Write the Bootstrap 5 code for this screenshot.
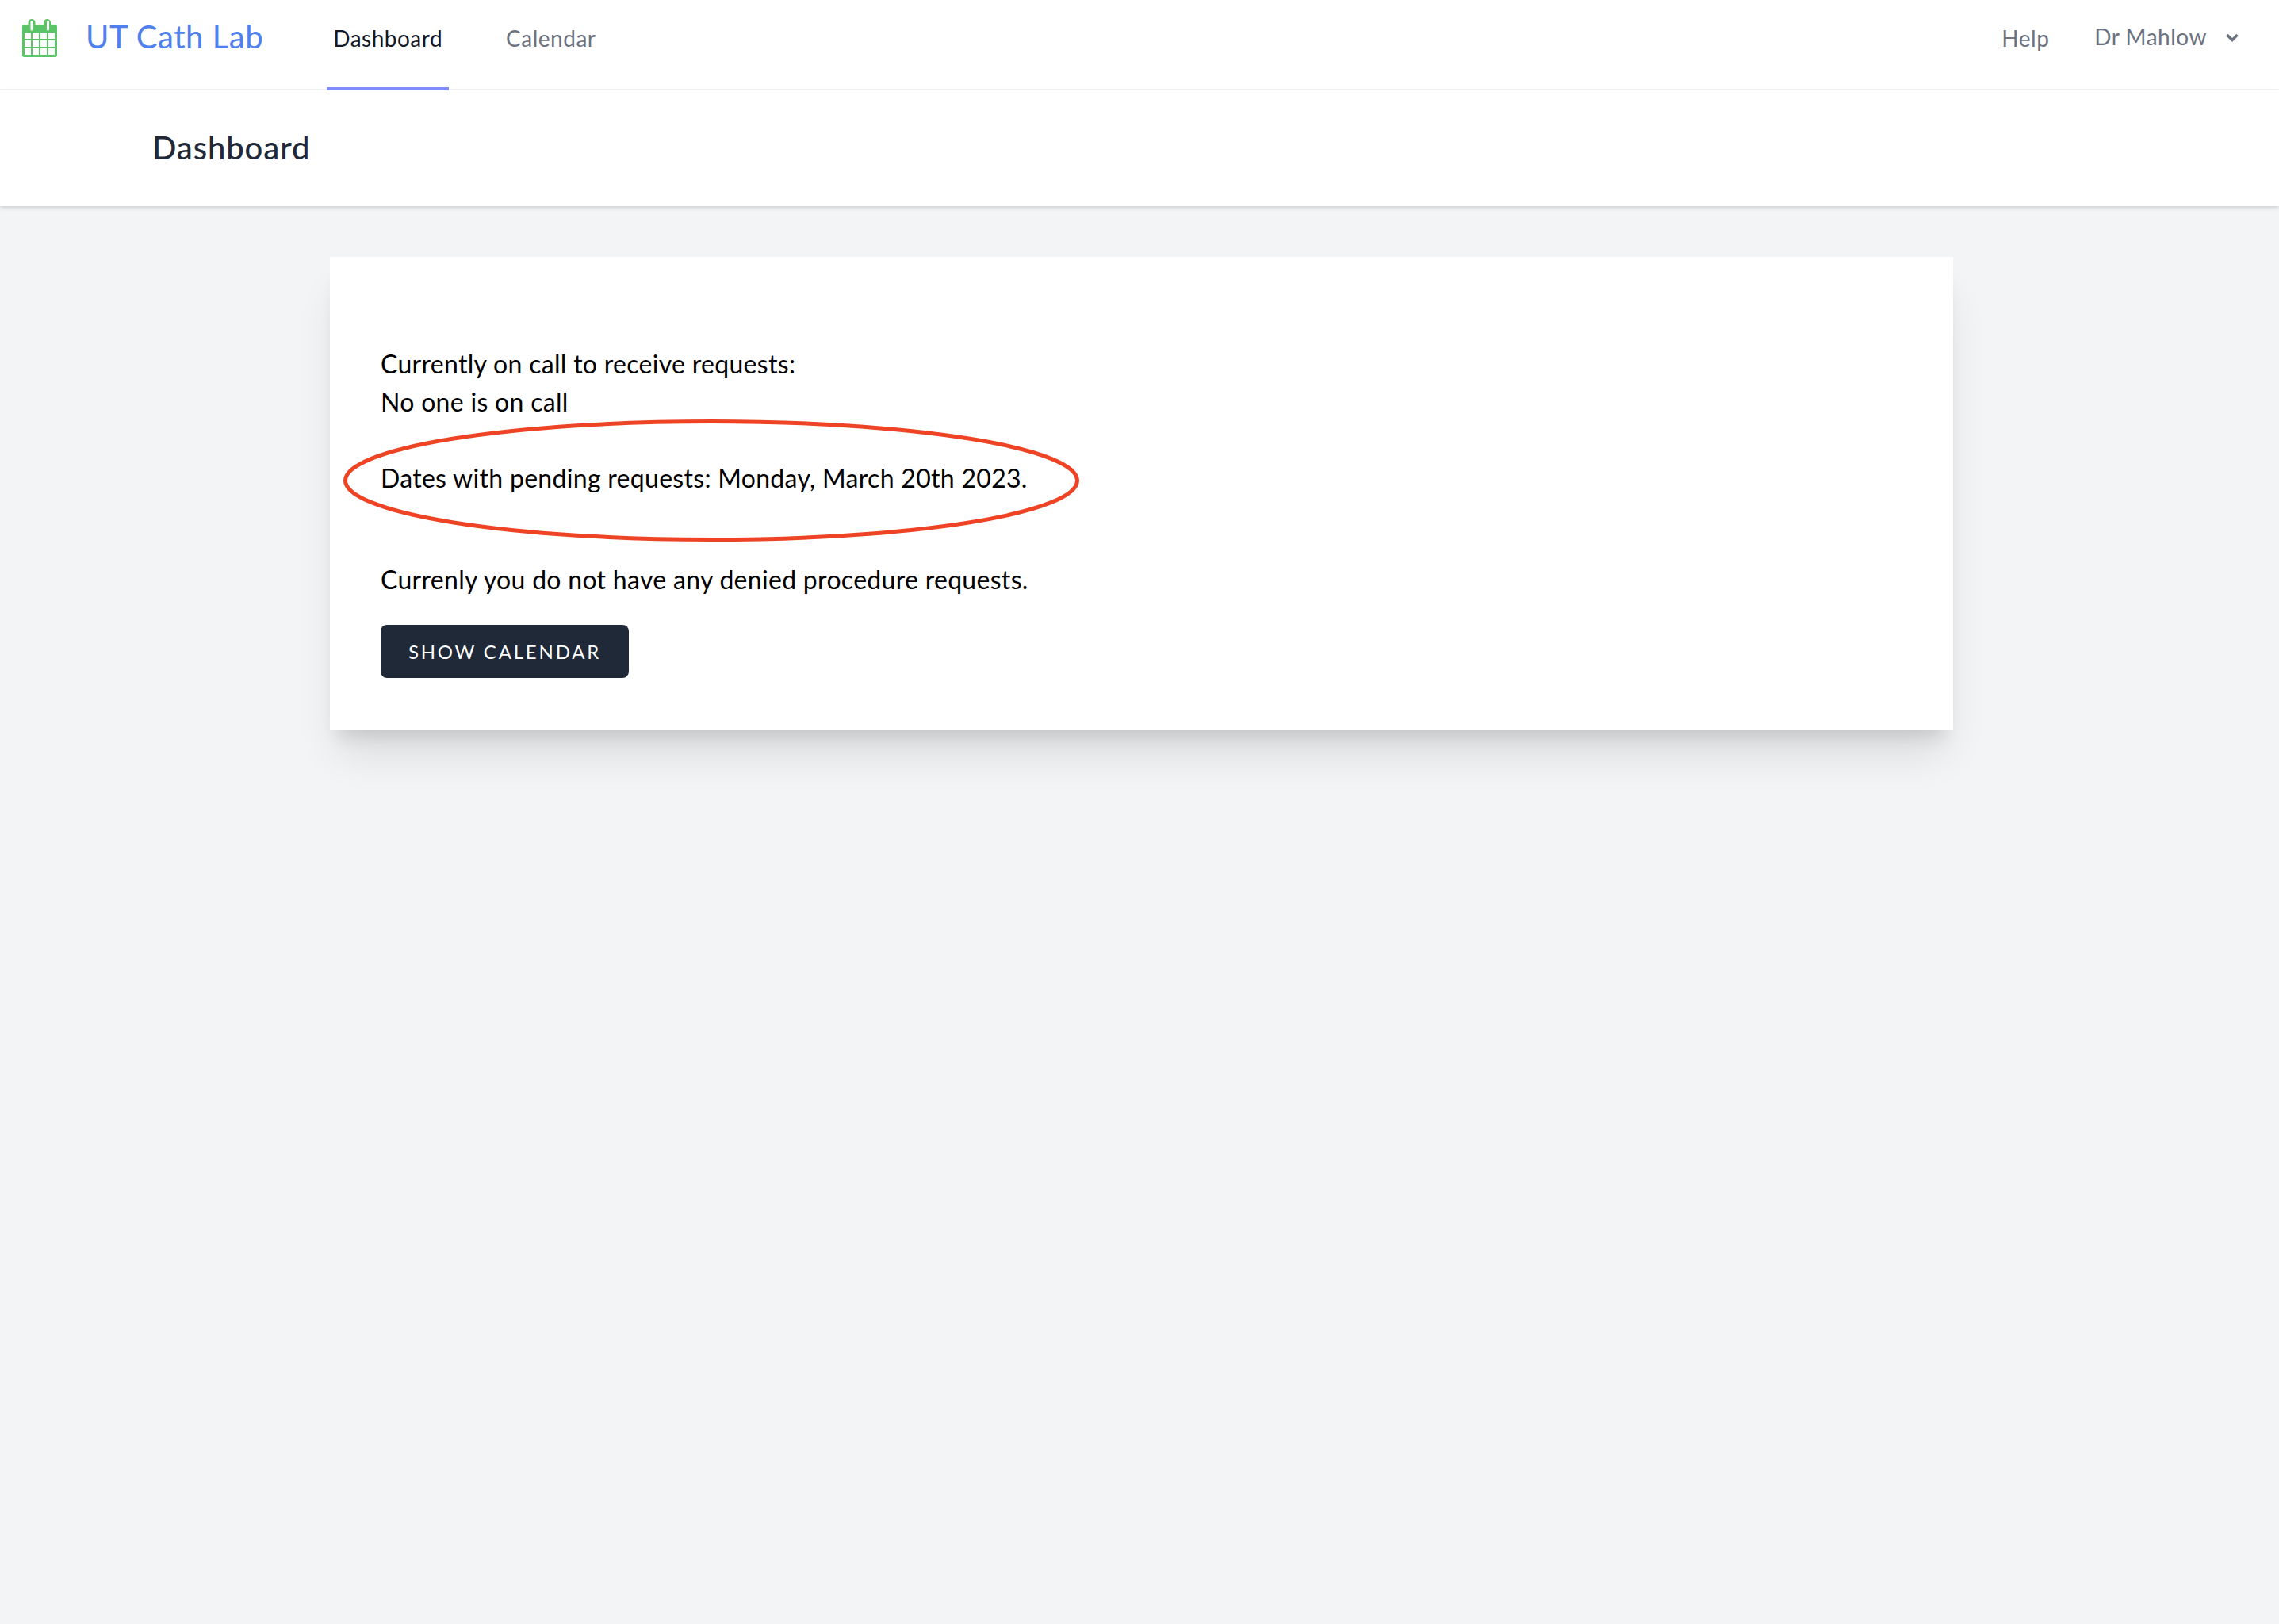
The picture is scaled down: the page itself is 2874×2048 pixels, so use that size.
<!DOCTYPE html>
<html lang="en">
<head>
<meta charset="utf-8">
<title>UT Cath Lab</title>
<link href="https://cdn.jsdelivr.net/npm/bootstrap@5.3.0/dist/css/bootstrap.min.css" rel="stylesheet">
<style>
body { background:#f3f4f6; font-family:"Lato","Noto Sans",sans-serif; min-height:2048px; }
.top-bar { height:114px; background:#fff; border-bottom:2px solid #f3f4f6; padding:0 51px 0 28px; }
.brand-mark { width:44px; height:48px; margin-top:24px; flex:none; }
.brand-name { font-size:40px; line-height:48px; color:#4f80ee; margin:22px 0 0 36px; text-decoration:none; letter-spacing:.55px; }
.tab-links { margin-left:80px; gap:64px; }
.tab-item { display:block; height:114px; padding:30px 8px 0; font-size:28px; line-height:36px; color:#6b7280; text-decoration:none; border-bottom:4px solid transparent; letter-spacing:.5px; }
.tab-item.is-on { color:#111827; border-bottom-color:#818cf8; }
.help-item { font-size:28px; line-height:36px; color:#6b7280; text-decoration:none; margin-top:30px; letter-spacing:.5px; }
.user-item { font-size:28px; line-height:36px; color:#6b7280; margin:28px 0 0 57px; gap:24px; background:none; border:0; padding:0; height:36px; letter-spacing:.5px; }
.user-item svg { width:16px; height:11px; margin-top:14px; }
.title-bar { height:146px; background:#fff; box-shadow:0 2px 6px rgba(0,0,0,.1),0 2px 4px rgba(0,0,0,.06); padding:44px 0 0 192px; }
.title-bar h2 { font-size:40px; line-height:56px; font-weight:500; color:#1f2937; margin:0; letter-spacing:.9px; }
.sheet { width:2047px; margin:64px 0 0 416px; background:#fff; padding:111px 64px 65px; box-shadow:0 40px 50px -10px rgba(0,0,0,.1),0 20px 20px -10px rgba(0,0,0,.1); font-size:32px; line-height:48px; color:#000; letter-spacing:.3px; }
.sheet p { margin:0; }
.gap-a { margin-top:48px !important; }
.gap-b { margin-top:80px !important; }
.cal-btn { display:block; width:313px; height:67px; margin-top:33px; padding:0; background:#1f2937; border:0; border-radius:8px; color:#fff; font-size:24px; line-height:67px; letter-spacing:2.8px; text-transform:uppercase; }
.ring-note { position:absolute; left:17px; top:205px; width:928px; height:154px; pointer-events:none; }
</style>
</head>
<body>
<nav class="top-bar d-flex">
  <svg class="brand-mark" viewBox="0 0 44 48" aria-hidden="true">
    <path fill="#5bc466" fill-rule="evenodd" d="M3 7h4.500V4.500a4.500 4.500 0 0 1 9 0V7h10.500V4.500a4.500 4.500 0 0 1 9 0V7H41a3 3 0 0 1 3 3v35a3 3 0 0 1-3 3H3a3 3 0 0 1-3-3V10a3 3 0 0 1 3-3ZM10.500 3.500v9.500a1.500 1.500 0 0 0 3 0V3.500a1.500 1.500 0 0 0-3 0ZM31 3.500v9.500a1.500 1.500 0 0 0 3 0V3.500a1.500 1.500 0 0 0-3 0ZM3 17v8h8v-8ZM13 17v8h8v-8ZM23 17v8h8v-8ZM33 17v8h8v-8ZM3 27v8h8v-8ZM13 27v8h8v-8ZM23 27v8h8v-8ZM33 27v8h8v-8ZM3 37v8h8v-8ZM13 37v8h8v-8ZM23 37v8h8v-8ZM33 37v8h8v-8Z"/>
  </svg>
  <a class="brand-name" href="#">UT Cath Lab</a>
  <div class="tab-links d-flex">
    <a class="tab-item is-on" href="#">Dashboard</a>
    <a class="tab-item" href="#">Calendar</a>
  </div>
  <a class="help-item ms-auto" href="#">Help</a>
  <button class="user-item d-flex" type="button">Dr Mahlow
    <svg viewBox="0 0 16 11" aria-hidden="true"><path d="M1.500 2 8 8.500 14.500 2" fill="none" stroke="#6b7280" stroke-width="3.500"/></svg>
  </button>
</nav>
<header class="title-bar"><h2>Dashboard</h2></header>
<main class="sheet position-relative">
  <p>Currently on call to receive requests:</p>
  <p>No one is on call</p>
  <p class="gap-a">Dates with pending requests: Monday, March 20th 2023.</p>
  <p class="gap-b">Currenly you do not have any denied procedure requests.</p>
  <button class="cal-btn" type="button">Show Calendar</button>
  <svg class="ring-note" viewBox="0 0 928 154" aria-hidden="true"><ellipse cx="464" cy="77" rx="461.500" ry="74.500" fill="none" stroke="#ee4425" stroke-width="5"/></svg>
</main>
<script src="https://cdn.jsdelivr.net/npm/bootstrap@5.3.0/dist/js/bootstrap.bundle.min.js"></script>
</body>
</html>
